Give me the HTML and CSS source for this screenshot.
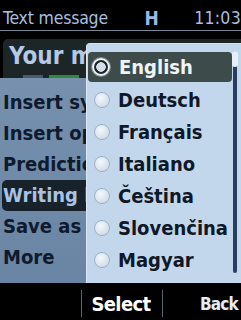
FILE: index.html
```html
<!DOCTYPE html>
<html>
<head>
<meta charset="utf-8">
<link rel="stylesheet" href="styles.css">
</head>
<body>
<div class="screen">
  <header class="status">
    <span class="title">Text message</span>
    <span class="net">H</span>
    <span class="time">11:03</span>
  </header>
  <main class="content">
    <div class="editor">
      <div class="editor-head">Your message</div>
      <div class="editor-line"><span class="ink"></span><span class="green"></span></div>
    </div>
    <ul class="menu">
      <li>Insert symbol</li>
      <li>Insert option</li>
      <li>Prediction</li>
      <li class="active">Writing language</li>
      <li>Save as draft</li>
      <li>More</li>
    </ul>
    <div class="popup">
      <ul class="langs">
        <li class="sel"><span class="radio on"></span>English</li>
        <li><span class="radio"></span>Deutsch</li>
        <li><span class="radio"></span>Français</li>
        <li><span class="radio"></span>Italiano</li>
        <li><span class="radio"></span>Čeština</li>
        <li><span class="radio"></span>Slovenčina</li>
        <li><span class="radio"></span>Magyar</li>
      </ul>
      <div class="scroll"><div class="thumb"></div></div>
    </div>
  </main>
  <footer class="softkeys">
    <span class="key left"></span>
    <span class="key mid">Select</span>
    <span class="key right">Back</span>
  </footer>
</div>
</body>
</html>
```
FILE: styles.css
```css
* { box-sizing: border-box; margin: 0; padding: 0; }
html, body { width: 241px; height: 320px; background: #000; overflow: hidden; }
body { font-family: "DejaVu Sans Condensed", "DejaVu Sans", sans-serif; }

.screen { width: 241px; height: 320px; display: flex; flex-direction: column; background: #000; }

.status {
  height: 31px; display: flex; align-items: center; padding: 5px 0 0 3px;
  border-bottom: 1px solid #7a8898; color: #a9bfe0; font-size: 17.5px;
}
.status .title { width: 145px; letter-spacing: -0.2px; }
.status .net { font-weight: bold; color: #9cb8e4; font-size: 19px; width: 51px; }
.status .time { margin-left: auto; letter-spacing: 0.3px; }

.content { position: relative; flex: 1; display: flex; flex-direction: column; }

.editor { height: 47px; padding: 8px 0 0 3px; display: flex; flex-direction: column; }
.editor-head {
  height: 33px; background: #1d2626; border-radius: 5px 0 0 0;
  color: #b4c8e8; font-size: 24px; font-weight: bold; padding: 3px 0 0 6px;
  white-space: nowrap; overflow: hidden; line-height: 28px;
}
.editor-line { flex: 1; display: flex; align-items: flex-end; padding-left: 20px; background: #1d2626; }
.editor-line .ink { width: 20px; height: 3px; background: #4a5a6a; margin-right: 6px; }
.editor-line .green { width: 30px; height: 3px; background: #2c8a3a; }

.menu {
  flex: 1; list-style: none; padding-top: 9px;
  background: linear-gradient(#7690ae, #6a84a4);
}
.menu li {
  height: 31px; line-height: 31px; padding-left: 3px; font-size: 20px; font-weight: bold;
  color: #0f1a2c; white-space: nowrap; overflow: hidden;
}
.menu li.active { background: #18222a; color: #a9c2e6; border-radius: 5px; margin-left: 2px; padding-left: 1px; }

.popup {
  position: absolute; left: 86px; right: 0; top: 12px; bottom: 0;
  background: #c3d7ec; border-left: 1px solid #dce8f4; border-top: 1px solid #d4e2f0;
  border-radius: 4px 0 0 0; display: flex;
}
.langs { list-style: none; padding: 8px 0 0 1px; width: 145px; }
.langs li {
  height: 32px; display: flex; align-items: center; font-size: 20px; font-weight: bold;
  color: #0f1828; white-space: nowrap; padding-left: 6px;
}
.langs li.sel { background: #3d4b4b; color: #eef4fa; border-radius: 4px; height: 30px; margin-bottom: 2px; padding-left: 4px; }
.radio {
  width: 16px; height: 16px; border-radius: 50%; margin-right: 8px; flex: none;
  background: radial-gradient(circle at 40% 35%, #f4f8fc, #d2deea 70%);
  border: 1px solid #9fb0c4;
}
.radio.on {
  width: 18px; height: 18px; margin-right: 9px;
  background: radial-gradient(circle, #d4dee8 0 4.5px, #1e2828 5px);
  border: 2px solid #eef3f8; box-shadow: 0 0 0 1px #7a8a8a;
}
.scroll { width: 4px; margin: 7px 0 10px 1px; background: #2b3d5e; border-radius: 2px; }
.thumb { height: 16px; width: 6px; margin-left: -1px; background: #e8eff8; border-radius: 3px; }

.softkeys { height: 37px; display: flex; align-items: center; color: #fff; padding-top: 4px; }
.key { height: 27px; display: flex; align-items: center; font-size: 20px; font-weight: bold; }
.key.left { width: 82px; border-right: 1px solid #5a6470; }
.key.mid { width: 81px; justify-content: center; border-right: 1px solid #5a6470; letter-spacing: -0.6px; padding-right: 2px; }
.key.right { flex: 1; justify-content: flex-end; padding-right: 3px; color: #e4ecf4; font-size: 17px; letter-spacing: -0.8px; }
```
